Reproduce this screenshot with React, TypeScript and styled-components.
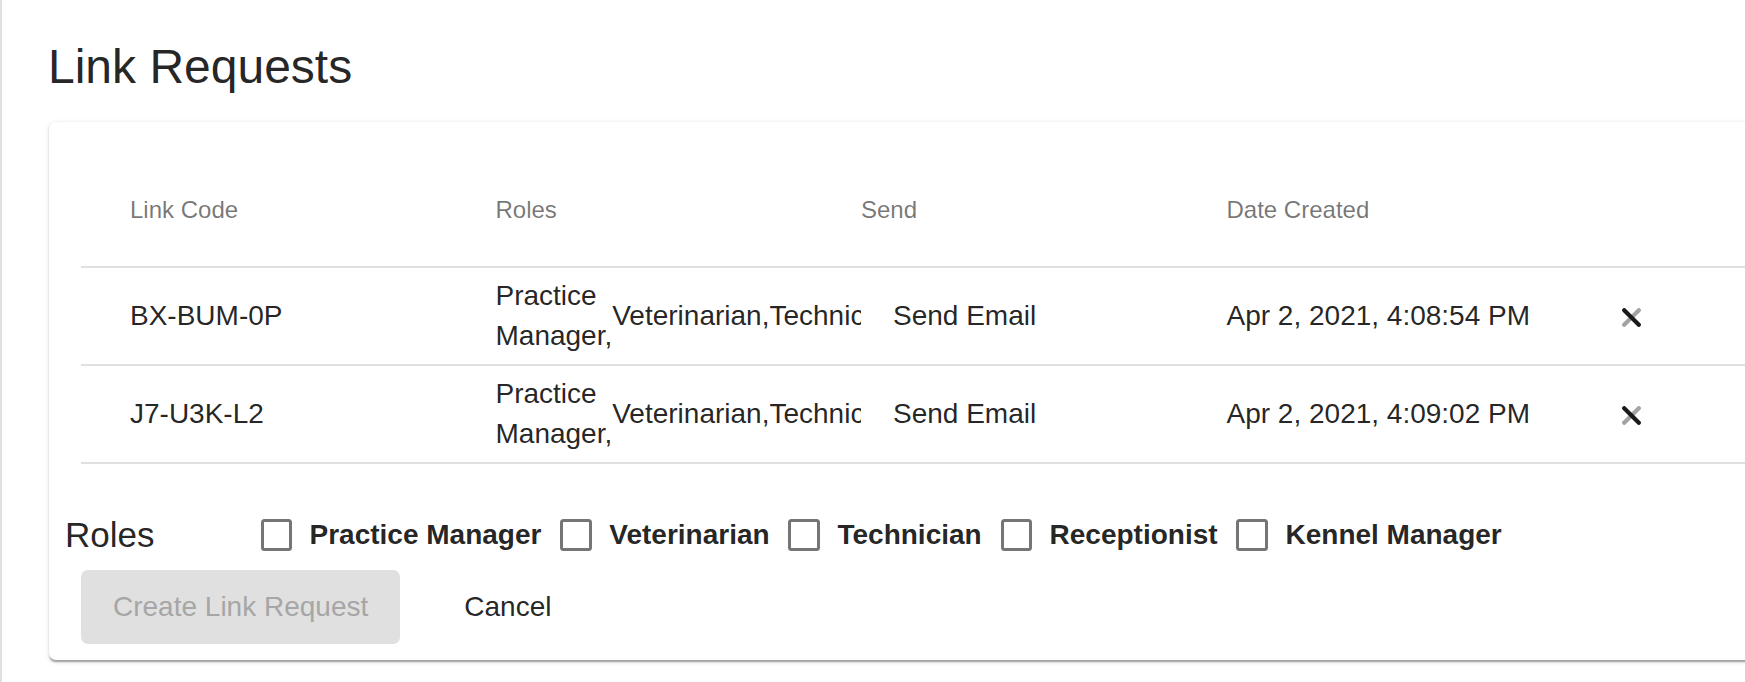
import React from "react";
import styled, { createGlobalStyle } from "styled-components";

const GlobalStyle = createGlobalStyle`
  html, body {
    margin: 0;
    padding: 0;
    background: #ffffff;
    overflow: hidden;
  }
  body {
    font-family: "Liberation Sans", Arial, Helvetica, sans-serif;
    color: rgba(0, 0, 0, 0.87);
  }
`;

const Page = styled.main`
  min-height: 100vh;
  box-sizing: border-box;
  border-left: 2px solid #e0e0e0;
  padding: 38px 0 0 45px;
  overflow: hidden;
`;

const Title = styled.h1`
  margin: 0 0 26px;
  padding-left: 1px;
  font-size: 48px;
  line-height: 58px;
  font-weight: 400;
  color: rgba(0, 0, 0, 0.87);
`;

const Card = styled.section`
  margin-left: 2px;
  width: 1900px;
  box-sizing: border-box;
  background: #ffffff;
  border-radius: 7px;
  padding: 32px 0 16px 15px;
  box-shadow: 0 3.5px 1.75px -1.75px rgba(0, 0, 0, 0.2),
    0 1.75px 1.75px 0 rgba(0, 0, 0, 0.14),
    0 1.75px 5.25px 0 rgba(0, 0, 0, 0.12);
`;

const Table = styled.div`
  margin-left: 17px;
  display: flex;
  flex-direction: column;
`;

const Row = styled.div<{ $head?: boolean }>`
  display: grid;
  grid-template-columns: repeat(5, 365.5px);
  align-items: center;
  height: ${(p) => (p.$head ? 112 : 96)}px;
  border-bottom: 2px solid #e0e0e0;
`;

const HeadCell = styled.div`
  padding-left: 49px;
  font-size: 24px;
  color: rgba(0, 0, 0, 0.54);
  white-space: nowrap;
`;

const Cell = styled.div`
  padding-left: 49px;
  min-width: 0;
  font-size: 28px;
  color: rgba(0, 0, 0, 0.87);
  white-space: nowrap;
`;

const RolesCell = styled.div`
  padding-left: 49px;
  min-width: 0;
  font-size: 28px;
  color: rgba(0, 0, 0, 0.87);
`;

const RolesList = styled.div`
  display: flex;
  align-items: center;
  width: 365px;
  overflow: hidden;
  line-height: 40px;
`;

const Role = styled.span``;

const SendButton = styled.button`
  background: none;
  border: 0;
  padding: 0 32px;
  height: 63px;
  border-radius: 7px;
  font-family: inherit;
  font-size: 28px;
  color: rgba(0, 0, 0, 0.87);
  cursor: pointer;
`;

const DeleteButton = styled.button`
  display: block;
  background: none;
  border: 0;
  padding: 0;
  margin: 3px 0 0 30px;
  width: 19px;
  height: 19px;
  cursor: pointer;
`;

const RolesRow = styled.div`
  display: flex;
  align-items: center;
  height: 70px;
  margin-top: 36px;
`;

const RolesLabel = styled.span`
  width: 195.5px;
  margin-left: 1px;
  flex: none;
  font-size: 35px;
  color: rgba(0, 0, 0, 0.87);
`;

const CheckGroup = styled.div`
  display: flex;
  align-items: center;
  gap: 18.9px;
`;

const CheckItem = styled.label`
  display: flex;
  align-items: center;
  gap: 17.5px;
  font-size: 28px;
  font-weight: 700;
  color: rgba(0, 0, 0, 0.87);
  white-space: nowrap;
  cursor: pointer;
`;

const Box = styled.span`
  display: block;
  width: 31.5px;
  height: 31.5px;
  box-sizing: border-box;
  border: 3.5px solid rgba(0, 0, 0, 0.54);
  border-radius: 3.5px;
`;

const ButtonRow = styled.div`
  display: flex;
  align-items: center;
  gap: 36px;
  height: 74px;
  margin-left: 17px;
`;

const ActionButton = styled.button<{ $disabled?: boolean }>`
  height: 74px;
  border: 0;
  border-radius: 7px;
  padding: 0 ${(p) => (p.$disabled ? 32 : 28)}px;
  font-family: inherit;
  font-size: 28px;
  background: ${(p) => (p.$disabled ? "#e0e0e0" : "transparent")};
  color: ${(p) => (p.$disabled ? "#a6a6a6" : "rgba(0, 0, 0, 0.87)")};
  cursor: ${(p) => (p.$disabled ? "default" : "pointer")};
`;

const CloseIcon = () => (
  <svg width="19" height="19" viewBox="0 0 19 19" aria-hidden="true">
    <line x1="2.2" y1="16.8" x2="16.8" y2="2.2" stroke="#a3a3a3" strokeWidth="4.2" strokeLinecap="round" />
    <line x1="2.2" y1="2.2" x2="16.8" y2="16.8" stroke="#1a1a1a" strokeWidth="4.2" strokeLinecap="round" />
  </svg>
);

const roles = ["Practice Manager,", "Veterinarian,", "Technician,", "Receptionist,", "Kennel Manager"];

const requests = [
  { code: "BX-BUM-0P", date: "Apr 2, 2021, 4:08:54 PM" },
  { code: "J7-U3K-L2", date: "Apr 2, 2021, 4:09:02 PM" },
];

const roleOptions = ["Practice Manager", "Veterinarian", "Technician", "Receptionist", "Kennel Manager"];

export default function App() {
  return (
    <>
      <GlobalStyle />
      <Page>
        <Title>Link Requests</Title>
        <Card>
          <Table>
            <Row $head>
              <HeadCell>Link Code</HeadCell>
              <HeadCell>Roles</HeadCell>
              <HeadCell>Send</HeadCell>
              <HeadCell>Date Created</HeadCell>
              <HeadCell />
            </Row>
            {requests.map((r) => (
              <Row key={r.code}>
                <Cell>{r.code}</Cell>
                <RolesCell>
                  <RolesList>
                    {roles.map((role) => (
                      <Role key={role}>{role}</Role>
                    ))}
                  </RolesList>
                </RolesCell>
                <Cell>
                  <SendButton>Send Email</SendButton>
                </Cell>
                <Cell>{r.date}</Cell>
                <Cell>
                  <DeleteButton aria-label="Delete">
                    <CloseIcon />
                  </DeleteButton>
                </Cell>
              </Row>
            ))}
          </Table>
          <RolesRow>
            <RolesLabel>Roles</RolesLabel>
            <CheckGroup>
              {roleOptions.map((o) => (
                <CheckItem key={o}>
                  <Box />
                  {o}
                </CheckItem>
              ))}
            </CheckGroup>
          </RolesRow>
          <ButtonRow>
            <ActionButton $disabled>Create Link Request</ActionButton>
            <ActionButton>Cancel</ActionButton>
          </ButtonRow>
        </Card>
      </Page>
    </>
  );
}
